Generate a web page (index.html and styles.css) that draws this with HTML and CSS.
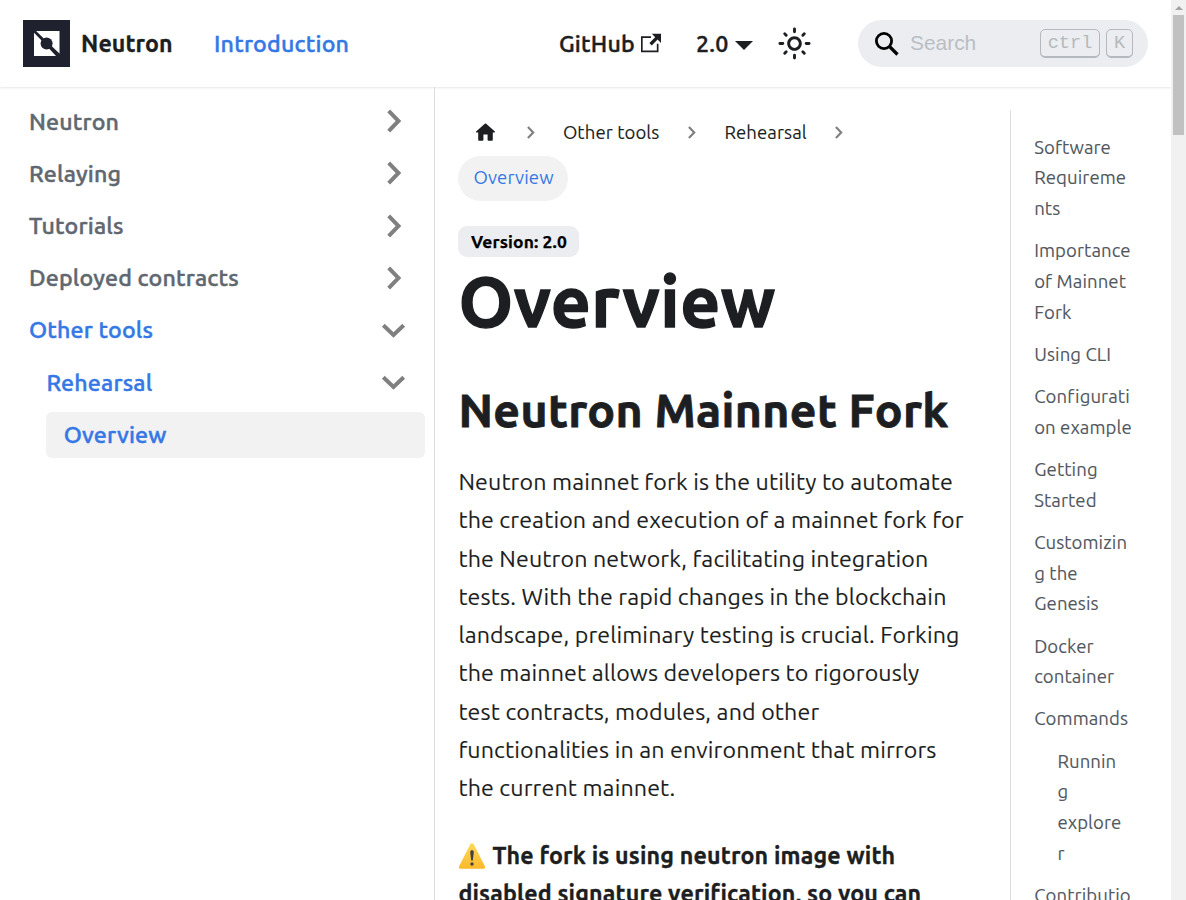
FILE: index.html
```html
<!DOCTYPE html>
<html lang="en">
<head>
<meta charset="utf-8">
<title>Overview | Neutron</title>
<link rel="stylesheet" href="styles.css">
</head>
<body>
<svg class="defs" width="0" height="0">
  <symbol id="chev" viewBox="0 0 24 24"><path d="M7.200 1.800 17 12 7.200 22.200" fill="none" stroke="#808080" stroke-width="4"/></symbol>
</svg>
<div class="window">
  <div class="page">
    <header class="navbar">
      <svg class="logo" viewBox="0 0 47 47"><path fill="#20212e" d="M0 0h47v47H0z"/><path fill="#fff" d="M13 11h23.500v23.500L13 11zM11 12.500 33 36H11z"/><path d="M11 11 37 35.500" stroke="#20212e" stroke-width="2.400"/><circle cx="23.600" cy="23.500" r="6" fill="#20212e"/></svg>
      <b class="brand">Neutron</b>
      <a class="nav intro">Introduction</a>
      <a class="nav github">GitHub</a>
      <svg class="ext" viewBox="0 0 24 24"><path fill="currentColor" d="M21 13v10h-21v-19h12v2h-10v15h17v-8h2zm3-12h-10.988l4.035 4-6.977 7.070 2.828 2.828 6.977-7.070 4.125 4.172v-11z"/></svg>
      <a class="nav version">2.0</a>
      <i class="caret"></i>
      <svg class="sun" viewBox="0 0 24 24"><path fill="currentColor" d="M12,9c1.650,0,3,1.350,3,3s-1.350,3-3,3s-3-1.350-3-3S10.350,9,12,9 M12,7c-2.760,0-5,2.240-5,5s2.240,5,5,5s5-2.240,5-5 S14.760,7,12,7L12,7z"/><path d="M12 2v2M12 20v2M2 12h2M20 12h2M5.300 5.300l1 1M17.700 17.700l1 1M5.300 18.700l1-1M17.700 6.300l1-1" fill="none" stroke="currentColor" stroke-width="2" stroke-linecap="round"/></svg>
      <div class="search">
        <svg class="glass" viewBox="0 0 24 24"><circle cx="9" cy="9" r="7.600" fill="none" stroke="#000" stroke-width="2.800"/><path d="m14.500 14.500 8 8" stroke="#000" stroke-width="3.200"/></svg>
        <span class="placeholder">Search</span>
        <kbd class="ctrl">ctrl</kbd><kbd class="key">K</kbd>
      </div>
    </header>
    <div class="body">
      <nav class="sidebar">
        <a class="item"><span>Neutron</span><svg><use href="#chev"/></svg></a>
        <a class="item"><span>Relaying</span><svg><use href="#chev"/></svg></a>
        <a class="item"><span>Tutorials</span><svg><use href="#chev"/></svg></a>
        <a class="item"><span>Deployed contracts</span><svg><use href="#chev"/></svg></a>
        <a class="item open"><span>Other tools</span><svg><use href="#chev"/></svg></a>
        <a class="item open level2"><span>Rehearsal</span><svg><use href="#chev"/></svg></a>
        <a class="item open level3"><span>Overview</span></a>
      </nav>
      <main class="content">
        <div class="crumbs">
          <svg class="home" viewBox="0 0 24 24"><path fill="currentColor" d="M10 19v-5h4v5c0 .550.450 1 1 1h3c.550 0 1-.450 1-1v-7h1.700c.460 0 .680-.570.330-.870L12.670 3.600c-.380-.340-.960-.340-1.340 0l-8.360 7.530c-.340.300-.130.870.330.870H5v7c0 .550.450 1 1 1h3c.550 0 1-.450 1-1z"/></svg>
          <svg class="sep"><use href="#chev"/></svg>
          <a class="c1">Other tools</a>
          <svg class="sep"><use href="#chev"/></svg>
          <a class="c2">Rehearsal</a>
          <svg class="sep"><use href="#chev"/></svg>
        </div>
        <div class="pill">Overview</div>
        <div><span class="badge">Version: 2.0</span></div>
        <h1>Overview</h1>
        <h2>Neutron Mainnet Fork</h2>
        <p>Neutron mainnet fork is the utility to automate<br>the creation and execution of a mainnet fork for<br>the Neutron network, facilitating integration<br>tests. With the rapid changes in the blockchain<br>landscape, preliminary testing is crucial. Forking<br>the mainnet allows developers to rigorously<br>test contracts, modules, and other<br>functionalities in an environment that mirrors<br>the current mainnet.</p>
        <p class="strong"><svg class="warn" viewBox="0 0 28 28"><defs><linearGradient id="g" x2="0" y2="1"><stop stop-color="#fdd95b"/><stop offset="1" stop-color="#fbb92b"/></linearGradient></defs><path d="M14 1.200c.8 0 1.300.400 1.700 1.100l11.200 22c.700 1.400 0 2.500-1.500 2.500H2.600c-1.500 0-2.200-1.100-1.500-2.500l11.200-22c.400-.700.900-1.100 1.700-1.100z" fill="url(#g)"/><path d="M12.200 10.300c0-2.600 3.600-2.600 3.600 0l-.9 7.600c-.1 1.100-1.700 1.100-1.800 0z" fill="#424242"/><circle cx="14" cy="22" r="1.700" fill="#424242"/></svg>The fork is using neutron image with<br>disabled signature verification, so you can</p>
      </main>
      <aside class="toc">
        <ul>
          <li>Software<br>Requireme<br>nts</li>
          <li>Importance<br>of Mainnet<br>Fork</li>
          <li>Using CLI</li>
          <li>Configurati<br>on example</li>
          <li>Getting<br>Started</li>
          <li>Customizin<br>g the<br>Genesis</li>
          <li>Docker<br>container</li>
          <li>Commands</li>
          <li class="nested">Runnin<br>g<br>explore<br>r</li>
          <li>Contributio</li>
        </ul>
      </aside>
    </div>
  </div>
  <div class="scrollbar"><i class="arrow"></i><i class="thumb"></i></div>
</div>
</body>
</html>
```

FILE: styles.css
```css
* { box-sizing: border-box; }
body { margin: 0; background: #fff; color: #1c1e21; font: 23.2px/38.28px Ubuntu, "Noto Sans", sans-serif; overflow: hidden; }
.defs { display: none; }
svg { display: block; flex: none; }
.window { display: flex; height: 900px; overflow: hidden; }
.page { width: 1171px; height: 900px; overflow: hidden; display: flex; flex-direction: column; }
.scrollbar { width: 15px; background: #f1f1f1; display: flex; flex-direction: column; align-items: center; }
.arrow { width: 0; height: 0; margin: 6px 0 5px; border: solid transparent; border-width: 0 4px 4px; border-bottom-color: #a3a3a3; }
.thumb { width: 11px; height: 120px; background: #c1c1c1; }
.navbar { height: 87px; flex: none; display: flex; align-items: center; padding: 0 23px; box-shadow: 0 1px 2px #0000001a; white-space: nowrap; }
.logo { width: 47px; height: 47px; margin-right: 11px; }
.brand { width: 133px; letter-spacing: .08px; -webkit-text-stroke: .3px; margin-top: -1px; }
.nav { font-weight: 500; letter-spacing: .2px; -webkit-text-stroke: .45px; margin-top: -1px; }
.intro { width: 345px; color: #3578e5; }
.github { width: 82px; }
.ext { width: 20px; height: 20px; margin-right: 35px; margin-top: -1px; }
.version { width: 39px; }
.caret { width: 0; height: 0; margin-top: 3px; border: solid transparent; border-width: 9px 9px 0; border-top-color: #1c1e21; }
.sun { width: 35px; height: 35px; margin-left: 24px; }
.search { width: 290px; height: 47px; margin-left: 46px; padding: 0 15px 0 17px; border-radius: 24px; background: #ebedf0; display: flex; align-items: center; }
.glass { width: 24px; height: 24px; margin-right: 11px; }
.placeholder { flex: 1; margin-top: -2px; color: #b9bec5; font: 20.9px "Liberation Sans", Arial, sans-serif; }
kbd { height: 29px; border: 1px solid #b4b9bf; border-radius: 5px; box-shadow: inset 0 -1px #b4b9bf; color: #b4b9bf; font: 18.6px/27px "Liberation Mono", monospace; text-align: center; }
.ctrl { width: 60px; margin-right: 6px; }
.key { width: 27px; }
.body { display: flex; flex: 1; min-height: 0; }
.sidebar { width: 435px; padding: 11.6px 9px 0 11.6px; border-right: 1px solid #dadde1; }
.item { display: flex; align-items: center; justify-content: space-between; height: 46.4px; margin-bottom: 5.8px; padding: 0 17.4px; border-radius: 6px; color: #606770; font-weight: 500; letter-spacing: .17px; white-space: nowrap; }
.item span { margin-top: -2px; -webkit-text-stroke: .45px; }
.item svg { width: 29px; height: 24px; margin-top: -1px; }
.open { color: #3578e5; }
.open svg { transform: rotate(90deg); }
.level2 { margin-left: 17.4px; }
.level3 { margin-left: 34.8px; background: #f2f2f2; }
.content { width: 575px; padding: 23px 0 0 23.4px; white-space: nowrap; letter-spacing: .13px; }
.crumbs { display: flex; align-items: center; height: 45px; font-size: 18.56px; letter-spacing: .08px; -webkit-text-stroke: .1px; }
.crumbs a { padding-top: 1px; }
.home { width: 25px; height: 25px; margin-left: 15px; margin-top: -1px; }
.sep { width: 15px; height: 13px; }
.home + .sep { margin-left: 25px; }
.c1 { width: 97px; margin: 0 24.500px; }
.c2 { width: 83px; margin: 0 24px 0 25px; }
.pill { width: 110px; height: 45px; margin-top: 1px; padding-left: 15px; border-radius: 23px; background: #f2f2f2; color: #3578e5; font-size: 18.56px; line-height: 43px; }
.badge { display: block; width: 121px; height: 31px; margin-top: 25px; border-radius: 9px; background: #ebedf0; color: #000; font-weight: 700; font-size: 17.4px; line-height: 31px; text-align: center; -webkit-text-stroke: .25px; }
h1 { margin: 0; height: 92px; font-size: 69.6px; line-height: 89px; letter-spacing: .55px; -webkit-text-stroke: 1.3px; }
h2 { margin: 32px 0 23px; font-size: 46.4px; line-height: 58px; letter-spacing: .35px; -webkit-text-stroke: .8px; }
p { margin: 0 0 29px; -webkit-text-stroke: .1px; }
.strong { font-weight: 700; letter-spacing: .17px; -webkit-text-stroke: .35px; }
.warn { display: inline-block; width: 28px; height: 28px; margin-right: 6px; vertical-align: -6px; }
.toc { margin: 23px 0 0; width: 161px; border-left: 1px solid #dadde1; padding-left: 23.2px; color: #525860; font-size: 18.56px; line-height: 30.66px; letter-spacing: .08px; -webkit-text-stroke: .1px; white-space: nowrap; }
ul { margin: 0; padding: 22.800px 0 0; list-style: none; }
li { margin-bottom: 11.6px; }
.nested { padding-left: 23.2px; }
```
